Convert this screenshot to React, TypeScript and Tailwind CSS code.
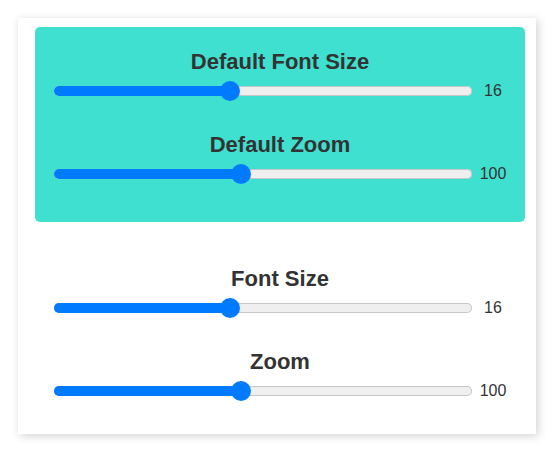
type SliderProps = {
  label: string;
  value: number;
  min: number;
  max: number;
  first?: boolean;
};

const TRACK = 418;
const THUMB = 20;

function SettingSlider({ label, value, min, max, first }: SliderProps) {
  const pct = (value - min) / (max - min);
  const center = THUMB / 2 + pct * (TRACK - THUMB);

  return (
    <div className={first ? "" : "mt-[31px]"}>
      <p className="text-center text-[22px] font-bold leading-[25px] text-[#333]">{label}</p>
      <div className="mt-[7px] flex h-[20px] items-center pl-[19px] pr-[13px]">
        <div className="relative h-[10px] w-[418px] rounded-full bg-[#efefef] shadow-[inset_0_0_0_1px_#c6c6c6]">
          <div className="absolute left-0 top-0 h-full rounded-full bg-[#007bff]" style={{ width: center }} />
          <div
            className="absolute top-1/2 h-[20px] w-[20px] -translate-y-1/2 rounded-full bg-[#007bff]"
            style={{ left: center - THUMB / 2 }}
          />
        </div>
        <span className="ml-[2px] w-[38px] text-center text-[16px] leading-[20px] text-[#333]">{value}</span>
      </div>
    </div>
  );
}

export default function App() {
  return (
    <div className="min-h-[459px] bg-white pl-[18px] pt-[18px] font-['Liberation_Sans',Arial,sans-serif]">
      <div className="w-[518px] bg-white pb-[33px] pl-[17px] pr-[11px] pt-[9px] shadow-[2px_2px_9px_rgba(0,0,0,0.18)]">
        <section className="rounded-[5px] bg-[#40e0d0] pb-[38px] pt-[22px]">
          <SettingSlider label="Default Font Size" value={16} min={6} max={30} first />
          <SettingSlider label="Default Zoom" value={100} min={20} max={200} />
        </section>
        <section className="mt-[44px]">
          <SettingSlider label="Font Size" value={16} min={6} max={30} first />
          <SettingSlider label="Zoom" value={100} min={20} max={200} />
        </section>
      </div>
    </div>
  );
}
